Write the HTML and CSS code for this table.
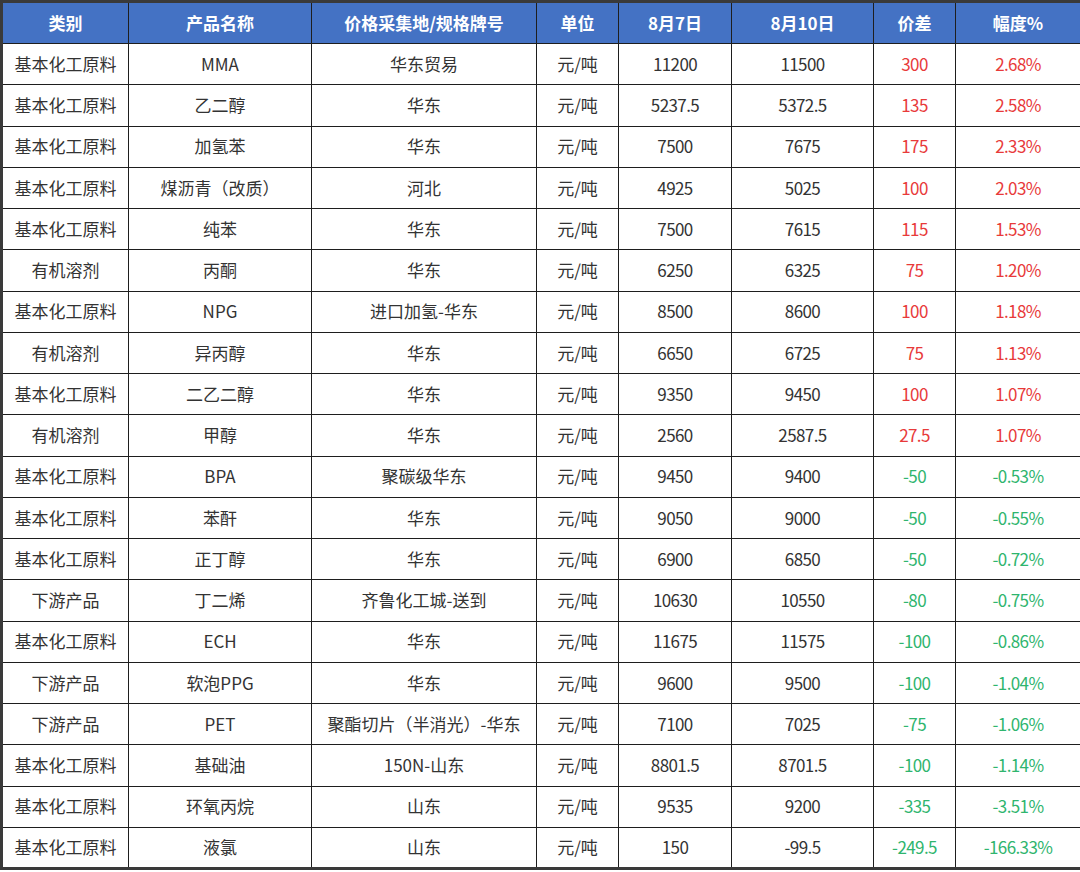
FILE: index.html
```html
<!DOCTYPE html>
<html lang="zh">
<head>
<meta charset="utf-8">
<link rel="stylesheet" href="styles.css">
</head>
<body>
<table class="price-table">
  <colgroup>
    <col class="c1"><col class="c2"><col class="c3"><col class="c4"><col class="c5"><col class="c6"><col class="c7"><col class="c8">
  </colgroup>
  <thead>
    <tr><th>类别</th><th>产品名称</th><th>价格采集地/规格牌号</th><th>单位</th><th>8月7日</th><th>8月10日</th><th>价差</th><th>幅度%</th></tr>
  </thead>
  <tbody>
    <tr><td>基本化工原料</td><td>MMA</td><td>华东贸易</td><td>元/吨</td><td>11200</td><td>11500</td><td class="up">300</td><td class="up">2.68%</td></tr>
    <tr><td>基本化工原料</td><td>乙二醇</td><td>华东</td><td>元/吨</td><td>5237.5</td><td>5372.5</td><td class="up">135</td><td class="up">2.58%</td></tr>
    <tr><td>基本化工原料</td><td>加氢苯</td><td>华东</td><td>元/吨</td><td>7500</td><td>7675</td><td class="up">175</td><td class="up">2.33%</td></tr>
    <tr><td>基本化工原料</td><td>煤沥青（改质）</td><td>河北</td><td>元/吨</td><td>4925</td><td>5025</td><td class="up">100</td><td class="up">2.03%</td></tr>
    <tr><td>基本化工原料</td><td>纯苯</td><td>华东</td><td>元/吨</td><td>7500</td><td>7615</td><td class="up">115</td><td class="up">1.53%</td></tr>
    <tr><td>有机溶剂</td><td>丙酮</td><td>华东</td><td>元/吨</td><td>6250</td><td>6325</td><td class="up">75</td><td class="up">1.20%</td></tr>
    <tr><td>基本化工原料</td><td>NPG</td><td>进口加氢-华东</td><td>元/吨</td><td>8500</td><td>8600</td><td class="up">100</td><td class="up">1.18%</td></tr>
    <tr><td>有机溶剂</td><td>异丙醇</td><td>华东</td><td>元/吨</td><td>6650</td><td>6725</td><td class="up">75</td><td class="up">1.13%</td></tr>
    <tr><td>基本化工原料</td><td>二乙二醇</td><td>华东</td><td>元/吨</td><td>9350</td><td>9450</td><td class="up">100</td><td class="up">1.07%</td></tr>
    <tr><td>有机溶剂</td><td>甲醇</td><td>华东</td><td>元/吨</td><td>2560</td><td>2587.5</td><td class="up">27.5</td><td class="up">1.07%</td></tr>
    <tr><td>基本化工原料</td><td>BPA</td><td>聚碳级华东</td><td>元/吨</td><td>9450</td><td>9400</td><td class="down">-50</td><td class="down">-0.53%</td></tr>
    <tr><td>基本化工原料</td><td>苯酐</td><td>华东</td><td>元/吨</td><td>9050</td><td>9000</td><td class="down">-50</td><td class="down">-0.55%</td></tr>
    <tr><td>基本化工原料</td><td>正丁醇</td><td>华东</td><td>元/吨</td><td>6900</td><td>6850</td><td class="down">-50</td><td class="down">-0.72%</td></tr>
    <tr><td>下游产品</td><td>丁二烯</td><td>齐鲁化工城-送到</td><td>元/吨</td><td>10630</td><td>10550</td><td class="down">-80</td><td class="down">-0.75%</td></tr>
    <tr><td>基本化工原料</td><td>ECH</td><td>华东</td><td>元/吨</td><td>11675</td><td>11575</td><td class="down">-100</td><td class="down">-0.86%</td></tr>
    <tr><td>下游产品</td><td>软泡PPG</td><td>华东</td><td>元/吨</td><td>9600</td><td>9500</td><td class="down">-100</td><td class="down">-1.04%</td></tr>
    <tr><td>下游产品</td><td>PET</td><td>聚酯切片（半消光）-华东</td><td>元/吨</td><td>7100</td><td>7025</td><td class="down">-75</td><td class="down">-1.06%</td></tr>
    <tr><td>基本化工原料</td><td>基础油</td><td>150N-山东</td><td>元/吨</td><td>8801.5</td><td>8701.5</td><td class="down">-100</td><td class="down">-1.14%</td></tr>
    <tr><td>基本化工原料</td><td>环氧丙烷</td><td>山东</td><td>元/吨</td><td>9535</td><td>9200</td><td class="down">-335</td><td class="down">-3.51%</td></tr>
    <tr><td>基本化工原料</td><td>液氯</td><td>山东</td><td>元/吨</td><td>150</td><td>-99.5</td><td class="down">-249.5</td><td class="down">-166.33%</td></tr>
  </tbody>
</table>
</body>
</html>
```

FILE: styles.css
```css
html, body {
  margin: 0;
  padding: 0;
  background: #ffffff;
}
.price-table {
  width: 1080px;
  border-collapse: collapse;
  table-layout: fixed;
  border: 3px solid #3a3a3a;
  font-family: "Noto Sans CJK SC", "Noto Sans", sans-serif;
  font-size: 17px;
  line-height: 1.2;
  color: #333333;
}
.c1 { width: 127px; }
.c2 { width: 183px; }
.c3 { width: 225px; }
.c4 { width: 82px; }
.c5 { width: 113px; }
.c6 { width: 142px; }
.c7 { width: 82px; }
.c8 { width: 126px; }
.price-table th,
.price-table td {
  border: 1px solid #1e1e1e;
  text-align: center;
  vertical-align: middle;
  padding: 0;
  white-space: nowrap;
}
.price-table td:nth-child(n+5) {
  letter-spacing: -0.6px;
}
.price-table thead tr {
  height: 42px;
}
.price-table th {
  background: #4472c4;
  color: #ffffff;
  font-weight: bold;
  font-size: 17px;
}
.price-table tbody tr {
  height: 41.25px;
}
.up {
  color: #e83a3a;
}
.down {
  color: #2fb56e;
}
```
